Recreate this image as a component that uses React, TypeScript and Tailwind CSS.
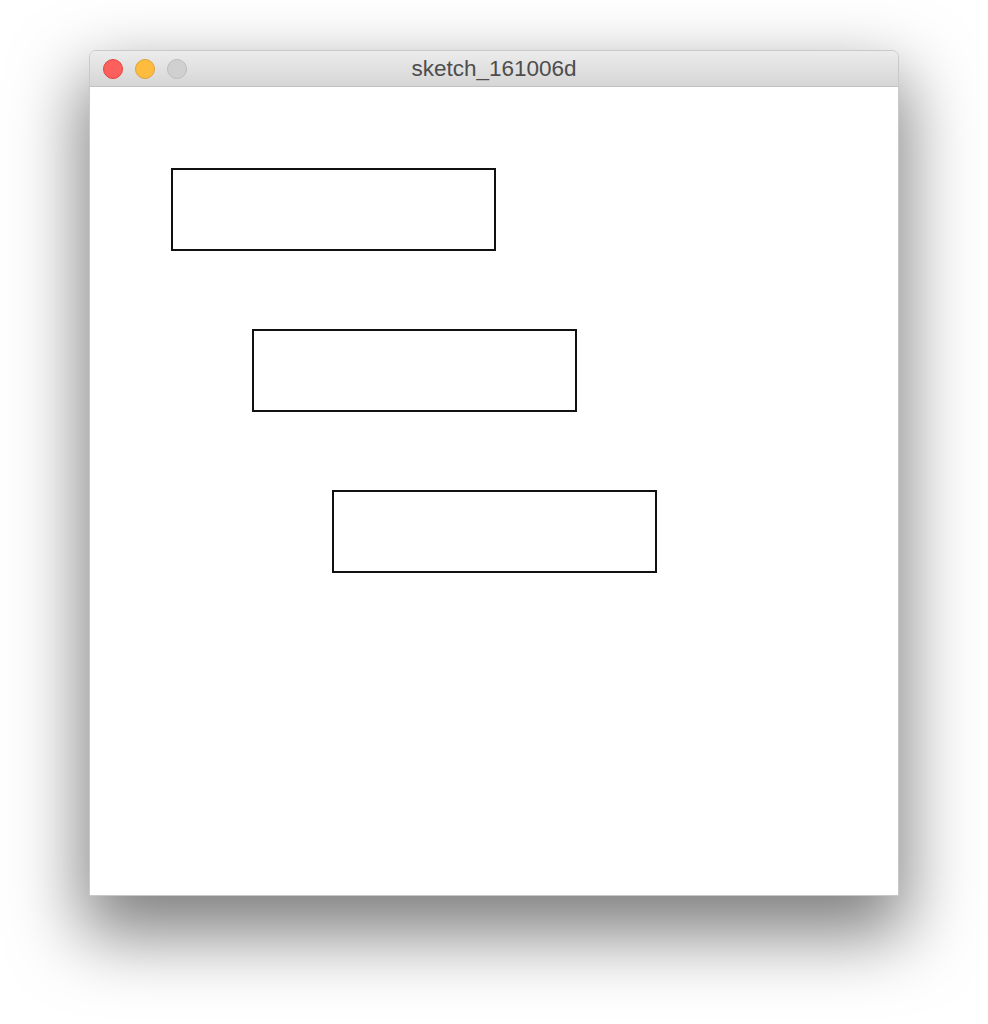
import React from 'react';

const Light: React.FC<{ fill: string; ring: string }> = ({ fill, ring }) => (
  <span className={`block h-[20px] w-[20px] rounded-full border ${fill} ${ring}`} />
);

const App: React.FC = () => {
  return (
    <div className="min-h-[1024px] w-[988px] bg-white pt-[51px] pl-[90px]">
      <div className="w-[808px] rounded-t-[6px] bg-white shadow-[0_32px_70px_8px_rgba(0,0,0,0.5)] outline outline-[#c9c9c9]">
        {/* title bar */}
        <div className="relative flex h-[36px] items-center rounded-t-[6px] border-b border-[#c2c2c2] bg-gradient-to-b from-[#ececec] to-[#d6d6d6] pl-[13px]">
          <div className="flex gap-[12px]">
            <Light fill="bg-[#fc605c]" ring="border-[#e0443e]" />
            <Light fill="bg-[#fdbc40]" ring="border-[#dea236]" />
            <Light fill="bg-[#d0d0d0]" ring="border-[#bcbcbc]" />
          </div>
          <div className="absolute inset-0 flex items-center justify-center font-['Liberation_Sans',Arial,sans-serif] text-[22.5px] text-[#4d4d4d]">
            sketch_161006d
          </div>
        </div>
        {/* canvas */}
        <div className="flex h-[808px] flex-col gap-[78px] pt-[81px] pl-[81px]">
          <div className="h-[83px] w-[325px] border-2 border-[#111]" />
          <div className="ml-[81px] h-[83px] w-[325px] border-2 border-[#111]" />
          <div className="ml-[161px] h-[83px] w-[325px] border-2 border-[#111]" />
        </div>
      </div>
    </div>
  );
};

export default App;
